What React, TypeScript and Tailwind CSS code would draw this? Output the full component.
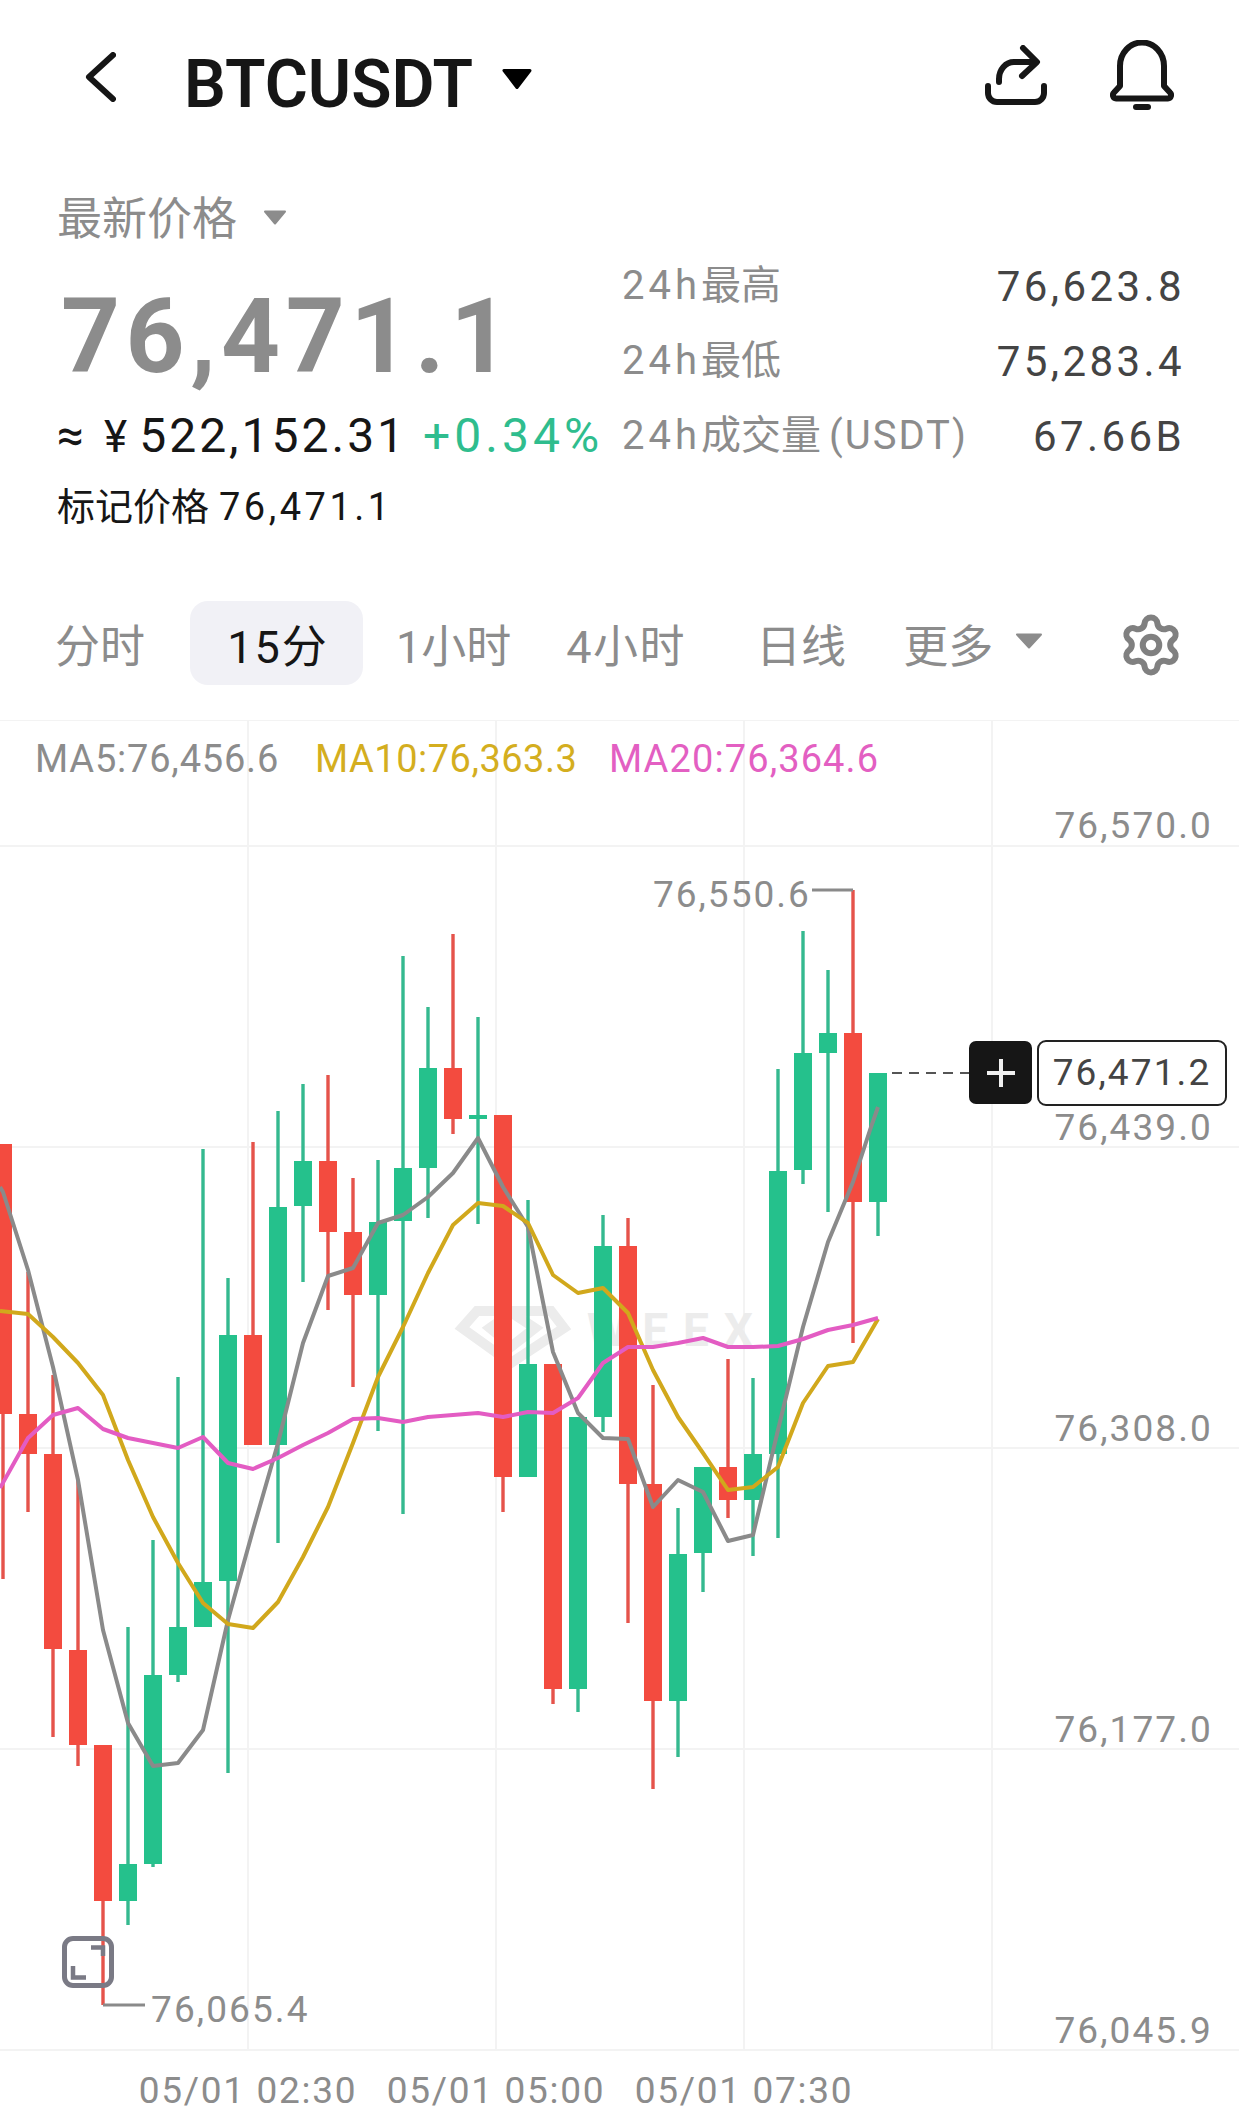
import React from "react";
import { Settings } from "lucide-react";

type Candle = [number, "g" | "r", number, number, number, number];

// x, colour, body top, body bottom, wick top, wick bottom
const candles: Candle[] = [
  [3, "r", 1144, 1414, 1144, 1579],
  [28, "r", 1414, 1454, 1272, 1512],
  [53, "r", 1454, 1649, 1375, 1737],
  [78, "r", 1650, 1745, 1480, 1766],
  [103, "r", 1745, 1901, 1745, 2005],
  [128, "g", 1864, 1901, 1627, 1925],
  [153, "g", 1675, 1864, 1540, 1867],
  [178, "g", 1627, 1675, 1377, 1682],
  [203, "g", 1582, 1627, 1149, 1627],
  [228, "g", 1335, 1581, 1278, 1773],
  [253, "r", 1335, 1445, 1142, 1445],
  [278, "g", 1207, 1445, 1111, 1543],
  [303, "g", 1161, 1206, 1084, 1282],
  [328, "r", 1161, 1232, 1075, 1310],
  [353, "r", 1232, 1295, 1178, 1387],
  [378, "g", 1222, 1295, 1160, 1431],
  [403, "g", 1168, 1221, 956, 1514],
  [428, "g", 1068, 1168, 1007, 1218],
  [453, "r", 1068, 1119, 934, 1134],
  [478, "g", 1115, 1119, 1017, 1224],
  [503, "r", 1115, 1477, 1115, 1512],
  [528, "g", 1364, 1477, 1200, 1477],
  [553, "r", 1364, 1689, 1364, 1704],
  [578, "g", 1417, 1689, 1417, 1712],
  [603, "g", 1246, 1417, 1215, 1432],
  [628, "r", 1246, 1484, 1218, 1623],
  [653, "r", 1484, 1701, 1385, 1789],
  [678, "g", 1554, 1701, 1508, 1757],
  [703, "g", 1467, 1553, 1467, 1592],
  [728, "r", 1467, 1500, 1359, 1518],
  [753, "g", 1454, 1500, 1378, 1556],
  [778, "g", 1171, 1454, 1069, 1538],
  [803, "g", 1053, 1170, 931, 1184],
  [828, "g", 1033, 1053, 970, 1212],
  [853, "r", 1033, 1202, 890, 1343],
  [878, "g", 1073, 1202, 1073, 1236],
];

const ma5 =
  "0,1187 3,1192 28,1270 53,1367 78,1480 103,1630 128,1723 153,1766 178,1763 203,1730 228,1620 253,1530 278,1443 303,1343 328,1276 353,1268 378,1223 403,1215 428,1197 453,1173 478,1138 503,1187 528,1227 553,1352 578,1413 603,1438 628,1439 653,1507 678,1480 703,1492 728,1541 753,1535 778,1430 803,1327 828,1242 853,1182 870,1130 878,1107";
const ma10 =
  "0,1311 28,1314 53,1337 78,1363 103,1395 128,1460 153,1517 178,1563 203,1603 228,1624 253,1628 278,1602 303,1557 328,1507 353,1443 378,1377 403,1327 428,1273 453,1225 478,1203 503,1206 528,1223 553,1275 578,1293 603,1288 628,1313 653,1370 678,1417 703,1453 728,1490 753,1487 778,1467 803,1403 828,1366 853,1362 878,1319";
const ma20 =
  "0,1488 28,1438 53,1415 78,1408 103,1429 128,1438 153,1443 178,1448 203,1437 228,1463 253,1469 278,1458 303,1445 328,1433 353,1419 378,1418 403,1422 428,1417 453,1415 478,1413 503,1417 528,1412 553,1413 578,1398 603,1363 628,1347 653,1347 678,1343 703,1338 728,1347 753,1347 778,1346 803,1339 828,1330 853,1325 878,1318";

const axisLabels: [string, number][] = [
  ["76,570.0", 838],
  ["76,439.0", 1140],
  ["76,308.0", 1441],
  ["76,177.0", 1742],
  ["76,045.9", 2043],
];

const timeLabels: [string, number][] = [
  ["05/01 02:30", 248],
  ["05/01 05:00", 496],
  ["05/01 07:30", 744],
];

const stats = [
  ["最高", "", "76,623.8"],
  ["最低", "", "75,283.4"],
  ["成交量", "(USDT)", "67.66B"],
];

const Chart: React.FC = () => {
  return (
    <div className="relative h-[1398px] w-full">
      <svg viewBox="0 720 1239 1398" width={1239} height={1398} className="block">
        <g stroke="#f3f3f3" strokeWidth={2}>
          <line x1={0} x2={1239} y1={720} y2={720} />
          {[846, 1147, 1448, 1749, 2050].map((y) => (
            <line key={y} x1={0} x2={1239} y1={y} y2={y} />
          ))}
          {[248, 496, 744, 992].map((x) => (
            <line key={x} x1={x} x2={x} y1={720} y2={2050} />
          ))}
        </g>

        {/* watermark */}
        <g stroke="#ececec" strokeWidth={10} fill="none">
          <path d="M477 1311 H551 L564 1328 L511 1363 L462 1328 Z" />
          <path d="M490 1328 L512 1313 L535 1328 L512 1346 Z" />
        </g>
        <text x={587} y={1346} fontSize={46} fontWeight={700} fill="#ececec" textLength={166}>
          WEEX
        </text>

        {candles.map(([x, c, top, bottom, wickTop, wickBottom]) => (
          <g key={x}>
            <rect x={x - 1.7} y={wickTop} width={3.4} height={wickBottom - wickTop} fill={c === "g" ? "#35b98f" : "#e5534b"} />
            <rect x={x - 9} y={top} width={18} height={bottom - top} fill={c === "g" ? "#25c18c" : "#f34b3f"} />
          </g>
        ))}

        <polyline points={ma5} fill="none" stroke="#8a8a8a" strokeWidth={4} strokeLinejoin="round" />
        <polyline points={ma10} fill="none" stroke="#d1a81c" strokeWidth={4} strokeLinejoin="round" />
        <polyline points={ma20} fill="none" stroke="#e35cc3" strokeWidth={4} strokeLinejoin="round" />

        {/* high / low markers */}
        <path d="M812 890 H853" stroke="#8a8a8a" strokeWidth={3} fill="none" />
        <path d="M103 2005 H145" stroke="#8a8a8a" strokeWidth={3} fill="none" />
        <text x={653} y={907} fontSize={37} letterSpacing={2} fill="#8c8c8c">
          76,550.6
        </text>
        <text x={151} y={2022} fontSize={37} letterSpacing={2.1} fill="#8c8c8c">
          76,065.4
        </text>

        {axisLabels.map(([label, y]) => (
          <text key={label} x={1213} y={y} textAnchor="end" fontSize={37} letterSpacing={2.1} fill="#8c8c8c">
            {label}
          </text>
        ))}
        {timeLabels.map(([label, x]) => (
          <text key={label} x={x} y={2103} textAnchor="middle" fontSize={37} letterSpacing={1.7} fill="#8c8c8c">
            {label}
          </text>
        ))}

        <line x1={892} x2={969} y1={1073} y2={1073} stroke="#555" strokeWidth={2} strokeDasharray="10 7" />
      </svg>

      <div className="absolute left-[35px] top-[16px] flex text-[38px] leading-[46px]">
        <span className="w-[280px] tracking-[0.8px] text-[#8c8c8c]">MA5:76,456.6</span>
        <span className="w-[294px] tracking-[0.5px] text-[#d4ae1f]">MA10:76,363.3</span>
        <span className="tracking-[1.1px] text-[#e35fc2]">MA20:76,364.6</span>
      </div>

      <div className="absolute left-[969px] top-[321px] flex h-[63px] w-[63px] items-center justify-center rounded-[7px] bg-[#161616]">
        <svg width={30} height={30} viewBox="0 0 30 30">
          <path d="M15 1V29M1 15H29" stroke="#f0f0f0" strokeWidth={4} />
        </svg>
      </div>
      <div className="absolute left-[1037px] top-[320px] flex h-[66px] w-[190px] items-center justify-center rounded-[9px] border-2 border-[#222] bg-white text-[37px] tracking-[2.1px] text-[#444]">
        76,471.2
      </div>

      <div className="absolute left-[62px] top-[1216px] h-[52px] w-[52px] rounded-[11px] border-[5px] border-[#7a7a85]">
        <svg width={42} height={42} viewBox="0 0 42 42" className="block">
          <path d="M24 6.5H36V15M6 25V36.5H19" fill="none" stroke="#7a7a85" strokeWidth={4.5} />
        </svg>
      </div>
    </div>
  );
};

export default function App() {
  return (
    <div className="flex h-[2118px] w-[1239px] flex-col overflow-hidden bg-white font-[Roboto,'Noto_Sans_CJK_SC',sans-serif]">
      <header className="flex h-[168px] items-center pl-[84px] pr-[65px]">
        <svg width={32} height={50} viewBox="0 0 32 50" className="mb-[14px]">
          <path d="M29 3 L5 25 L29 47" fill="none" stroke="#161616" strokeWidth={6} strokeLinecap="round" strokeLinejoin="round" />
        </svg>
        <span className="ml-[68px] mt-[2px] text-[66px] font-semibold leading-none text-[#161616]">BTCUSDT</span>
        <svg width={32} height={22} viewBox="0 0 32 22" className="mb-[10px] ml-[28px]">
          <path d="M3 2.500H29L16 19.500Z" fill="#000" stroke="#000" strokeWidth={3} strokeLinejoin="round" />
        </svg>
        <svg width={62} height={60} viewBox="0 0 62 60" className="mb-[18px] ml-auto" fill="none" stroke="#161616" strokeWidth={6} strokeLinecap="round" strokeLinejoin="round">
          <path d="M3 41V48a9 9 0 0 0 9 9H50a9 9 0 0 0 9-9V41" />
          <path d="M14 37V34a15 17 0 0 1 15-17H50" />
          <path d="M38 3L52 17L37 31" />
        </svg>
        <svg width={64} height={70} viewBox="0 0 64 70" className="mb-[18px] ml-[63px]" fill="none" stroke="#161616" strokeWidth={6} strokeLinejoin="round">
          <path d="M10 26a22 23.500 0 0 1 44 0V46l6 6.500c2 2 1 6-2 6H6c-3 0-4-4-2-6L10 46Z" />
          <rect x={23} y={64} width={18} height={6} rx={3} fill="#161616" stroke="none" />
        </svg>
      </header>

      <section className="flex pl-[57px] pr-[54px]">
        <div className="w-[565px]">
          <div className="mt-[30px] flex items-center text-[45px] leading-[46px] text-[#8c8c8c]">
            最新价格
            <svg width={24} height={15} viewBox="0 0 24 15" className="mb-[6px] ml-[26px]">
              <path d="M2 1.500H22L12 13.500Z" fill="#8c8c8c" stroke="#8c8c8c" strokeWidth={2} strokeLinejoin="round" />
            </svg>
          </div>
          <div className="mt-[34px] pl-[4px] text-[103px] font-bold leading-[120px] tracking-[5.5px] text-[#8c8c8c]">76,471.1</div>
          <div className="mt-[14px] flex items-baseline whitespace-nowrap text-[48px] leading-[50px] text-[#161616]">
            <span>≈</span>
            <span className="ml-[20px] text-[44px]">¥</span>
            <span className="ml-[12px] tracking-[3px]">522,152.31</span>
            <span className="ml-[16px] tracking-[4px] text-[#2fbd8e]">+0.34%</span>
          </div>
          <div className="mt-[22px] flex items-baseline text-[38px] leading-[46px] text-[#161616]">
            <span>标记价格</span>
            <span className="ml-[10px] tracking-[3.5px]">76,471.1</span>
          </div>
        </div>
        <div className="mt-[94px] flex flex-1 flex-col gap-[25px]">
          {stats.map(([label, unit, value]) => (
            <div key={label} className="flex h-[50px] items-center justify-between text-[40px] text-[#8c8c8c]">
              <span className="flex items-baseline">
                <span className="tracking-[4px]">24h</span>
                {label}
                {unit && <span className="ml-[8px] tracking-[2px]">{unit}</span>}
              </span>
              <span className="text-[42px] tracking-[3.4px] text-[#444]">{value}</span>
            </div>
          ))}
        </div>
      </section>

      <nav className="mt-[71px] flex h-[84px] items-center pl-[55px] text-[45px] text-[#8c8c8c]">
        <span className="pt-[10px]">分时</span>
        <span className="ml-[45px] flex h-[84px] w-[173px] items-center justify-center rounded-[18px] bg-[#f1f1f6] pl-[3px] pt-[10px] tracking-[2px] text-[#161616]">15分</span>
        <span className="ml-[33px] pt-[10px]">1小时</span>
        <span className="ml-[55px] pt-[10px] tracking-[1.5px]">4小时</span>
        <span className="ml-[70px] pt-[10px]">日线</span>
        <span className="ml-[57px] pt-[10px]">更多</span>
        <svg width={28} height={16} viewBox="0 0 28 16" className="mb-[4px] ml-[22px]">
          <path d="M2 1.500H26L14 14.500Z" fill="#8c8c8c" stroke="#8c8c8c" strokeWidth={2} strokeLinejoin="round" />
        </svg>
        <Settings size={66} strokeWidth={2.2} color="#808080" className="ml-[75px] mt-[4px]" />
      </nav>

      <div className="mt-[35px]">
        <Chart />
      </div>
    </div>
  );
}
